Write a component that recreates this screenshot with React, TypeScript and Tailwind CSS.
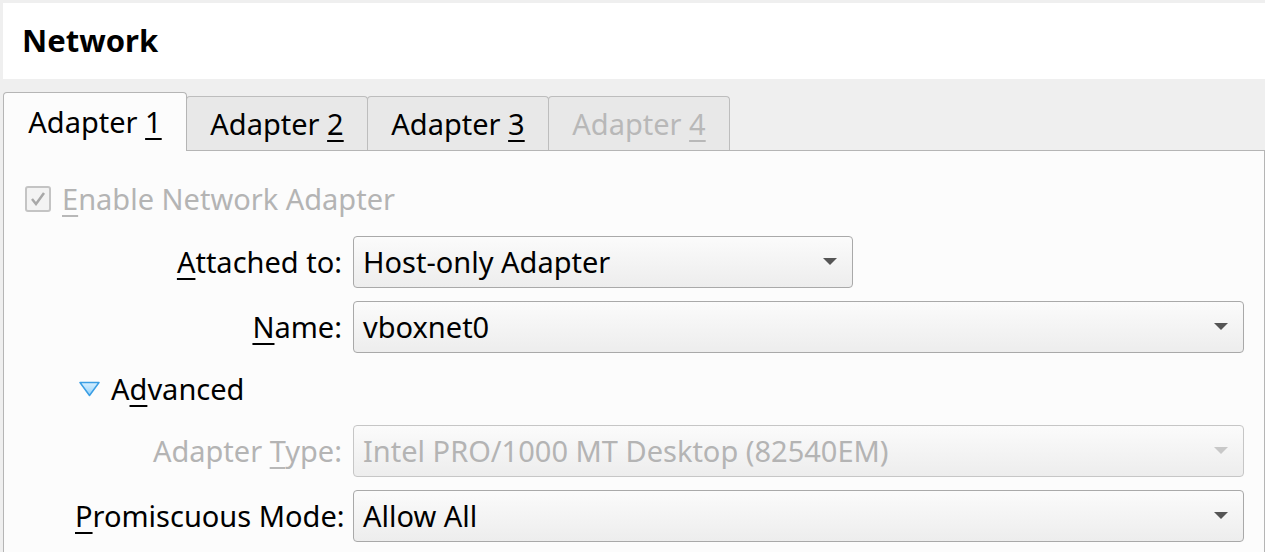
import React from "react";

const U = ({ children, dim }: { children: React.ReactNode; dim?: boolean }) => (
  <span className={`underline decoration-2 underline-offset-[5px] ${dim ? "decoration-[#b8b8b8]" : "decoration-black"}`}>{children}</span>
);

const Arrow = ({ dim }: { dim?: boolean }) => (
  <svg width="14" height="8" viewBox="0 0 14 8" className="shrink-0">
    <path d="M0 0 L14 0 L7 7 Z" fill={dim ? "#c8c8c8" : "#555555"} />
  </svg>
);

const Combo = ({ text, dim, className }: { text: string; dim?: boolean; className?: string }) => (
  <div
    className={`h-[52px] rounded-[4px] border flex items-center justify-between pl-[9px] pr-[15px] bg-gradient-to-b from-[#fbfbfb] to-[#ededed] ${
      dim ? "border-[#c6c6c6] text-[#b4b4b4]" : "border-[#a9a9a9] text-black"
    } ${className ?? ""}`}
  >
    <span className="leading-none pb-[2px] whitespace-nowrap">{text}</span>
    <Arrow dim={dim} />
  </div>
);

const Tab = ({ children, active, dim }: { children: React.ReactNode; active?: boolean; dim?: boolean }) => (
  <div
    className={`border border-b-0 rounded-t-[4px] flex items-center justify-center ${
      active
        ? "h-[59px] w-[184px] bg-[#fcfcfc] border-[#b5b5b5] -mb-px relative z-10 pb-[1px]"
        : "h-[54px] w-[182px] bg-[#e8e8e8] border-[#bdbdbd] -ml-px"
    } ${dim ? "text-[#b8b8b8]" : "text-black"}`}
  >
    <span className="whitespace-nowrap">{children}</span>
  </div>
);

export default function App() {
  return (
    <div
      className="w-[1265px] h-[552px] overflow-hidden bg-[#efefef] pt-[3px] pl-[3px] text-[29px] text-black"
      style={{ fontFamily: "'Noto Sans', 'Open Sans', sans-serif" }}
    >
      <div className="h-[76px] bg-white flex items-center pl-[19px]">
        <h1 className="font-bold text-[31px] leading-none pb-[2px]">Network</h1>
      </div>
      <div className="mt-[13px] flex items-end">
        <Tab active>
          Adapter <U>1</U>
        </Tab>
        <Tab>
          Adapter <U>2</U>
        </Tab>
        <Tab>
          Adapter <U>3</U>
        </Tab>
        <Tab dim>
          Adapter <U dim>4</U>
        </Tab>
      </div>
      <div className="border border-[#b5b5b5] bg-[#fcfcfc] h-[420px] pt-[34px] pl-[21px] pr-[20px]">
        <div className="flex items-center gap-[11px] text-[#b4b4b4] h-[28px]">
          <div className="w-[26px] h-[26px] border-2 border-[#c4c4c4] rounded-[3px] bg-[#f3f3f3] flex items-center justify-center">
            <svg width="16" height="14" viewBox="0 0 16 14">
              <path d="M2 7 L6 12 L14 1" stroke="#a8a8a8" strokeWidth="2.5" fill="none" />
            </svg>
          </div>
          <span className="leading-none pb-[2px] whitespace-nowrap">
            <U dim>E</U>nable Network Adapter
          </span>
        </div>
        <div className="mt-[23px] ml-[50px] grid grid-cols-[267px_1fr] gap-x-[11px] gap-y-[13px] items-center">
          <div className="text-right whitespace-nowrap">
            <U>A</U>ttached to:
          </div>
          <Combo text="Host-only Adapter" className="w-[500px]" />
          <div className="text-right whitespace-nowrap">
            <U>N</U>ame:
          </div>
          <Combo text="vboxnet0" />
          <div className="col-span-2 h-[46px] flex items-center gap-[11px] pl-[4px]">
            <svg width="21" height="16" viewBox="0 0 21 16">
              <defs>
                <linearGradient id="g" x1="0" y1="0" x2="0" y2="1">
                  <stop offset="0" stopColor="#d8f0ff" />
                  <stop offset="1" stopColor="#8fd0fb" />
                </linearGradient>
              </defs>
              <path d="M1 1.5 L20 1.5 L10.5 14.5 Z" fill="url(#g)" stroke="#3a9ee4" strokeWidth="1.5" strokeLinejoin="round" />
            </svg>
            <span className="whitespace-nowrap">
              A<U>d</U>vanced
            </span>
          </div>
          <div className="text-right text-[#b4b4b4] whitespace-nowrap">
            Adapter <U dim>T</U>ype:
          </div>
          <Combo text="Intel PRO/1000 MT Desktop (82540EM)" dim />
          <div className="text-right whitespace-nowrap">
            <U>P</U>romiscuous Mode:
          </div>
          <Combo text="Allow All" />
        </div>
      </div>
    </div>
  );
}
